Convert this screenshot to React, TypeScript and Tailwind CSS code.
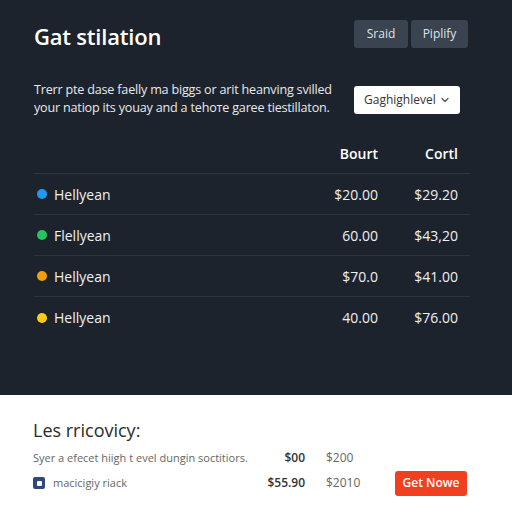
import { ChevronDown } from 'lucide-react';

const rows = [
  { dot: 'bg-[#1e9bf0]', name: 'Hellyean', a: '$20.00', b: '$29.20' },
  { dot: 'bg-[#22c55e]', name: 'Flellyean', a: '60.00', b: '$43,20' },
  { dot: 'bg-[#f59e0b]', name: 'Hellyean', a: '$70.0', b: '$41.00' },
  { dot: 'bg-[#facc15]', name: 'Hellyean', a: '40.00', b: '$76.00' },
];

export default function App() {
  return (
    <div className="w-[512px] h-[512px] overflow-hidden flex flex-col" style={{ fontFamily: '"Open Sans", "Noto Sans", sans-serif' }}>
      {/* Dark panel */}
      <div className="h-[395px] shrink-0 bg-[#1d232c] pl-[34px] pr-[42px] pt-[20px] text-white">
        <div className="flex items-start justify-between">
          <h1 className="mt-[2px] text-[22px] font-semibold leading-[28px] tracking-[-0.2px]">Gat stilation</h1>
          <div className="flex gap-[3px] mr-[2px]">
            <button className="h-[28px] w-[54px] rounded-[3px] bg-[#3a4350] text-[12px] text-[#dfe3e8]">Sraid</button>
            <button className="h-[28px] w-[57px] rounded-[3px] bg-[#3a4350] text-[12px] text-[#dfe3e8]">Piplify</button>
          </div>
        </div>

        <div className="mt-[31px] flex items-start justify-between">
          <p className="text-[12.6px] leading-[18px] text-[#e6e9ed] tracking-[-0.2px]">
            Trerr pte dase faelly ma biggs or arit heanving svilled
            <br />
            your natiop its youay and a tehoте garee tiestillaton.
          </p>
          <div className="mt-[5px] mr-[10px] flex h-[28px] w-[106px] items-center justify-between rounded-[3px] bg-white pl-[10px] pr-[9px] text-[12px] text-[#333]">
            <span>Gaghighlevel</span>
            <ChevronDown size={12} strokeWidth={2.5} className="text-[#555]" />
          </div>
        </div>

        <div className="mt-[28px]">
          <div className="grid grid-cols-[1fr_80px_80px] items-center border-b border-[#2e3540] pb-[10px] pr-[12px] text-[14px] font-semibold leading-[18px]">
            <span />
            <span className="text-right">Bourt</span>
            <span className="text-right">Cortl</span>
          </div>
          {rows.map((r, i) => (
            <div
              key={i}
              className={`grid h-[41px] grid-cols-[1fr_80px_80px] items-center pr-[12px] text-[14px] text-[#eef0f3] ${i < rows.length - 1 ? 'border-b border-[#2e3540]' : ''}`}
            >
              <span className="flex items-center gap-[7px] pl-[3px]">
                <span className={`h-[10px] w-[10px] rounded-full ${r.dot}`} />
                {r.name}
              </span>
              <span className="text-right">{r.a}</span>
              <span className="text-right">{r.b}</span>
            </div>
          ))}
        </div>
      </div>

      {/* Light panel */}
      <div className="flex-1 bg-white pl-[33px] pr-[45px] pt-[24px] text-[#222]">
        <h2 className="text-[18px] leading-[22px] text-[#2a2a2a]">Les rricovicy:</h2>
        <div className="mt-[5px] grid grid-cols-[1fr_50px_90px_72px] items-center text-[11px] text-[#666]">
          <span className="h-[24px] whitespace-nowrap leading-[24px]">Syer a efecet hiigh t evel dungin soctitiors.</span>
          <span className="text-right text-[12px] font-semibold text-[#333]">$00</span>
          <span className="pl-[21px] text-[12px]">$200</span>
          <span />
          <span className="flex h-[26px] items-center gap-[8px] whitespace-nowrap">
            <span className="flex h-[12px] w-[12px] items-center justify-center rounded-[2px] bg-[#2f4a7a]">
              <span className="h-[5px] w-[5px] rounded-[1px] bg-white" />
            </span>
            macicigiy riack
          </span>
          <span className="text-right text-[12px] font-semibold text-[#333]">$55.90</span>
          <span className="pl-[21px] text-[12px]">$2010</span>
          <button className="h-[25px] w-[72px] rounded-[3px] bg-[#f0401f] text-[12px] font-semibold text-white">Get Nowe</button>
        </div>
      </div>
    </div>
  );
}
